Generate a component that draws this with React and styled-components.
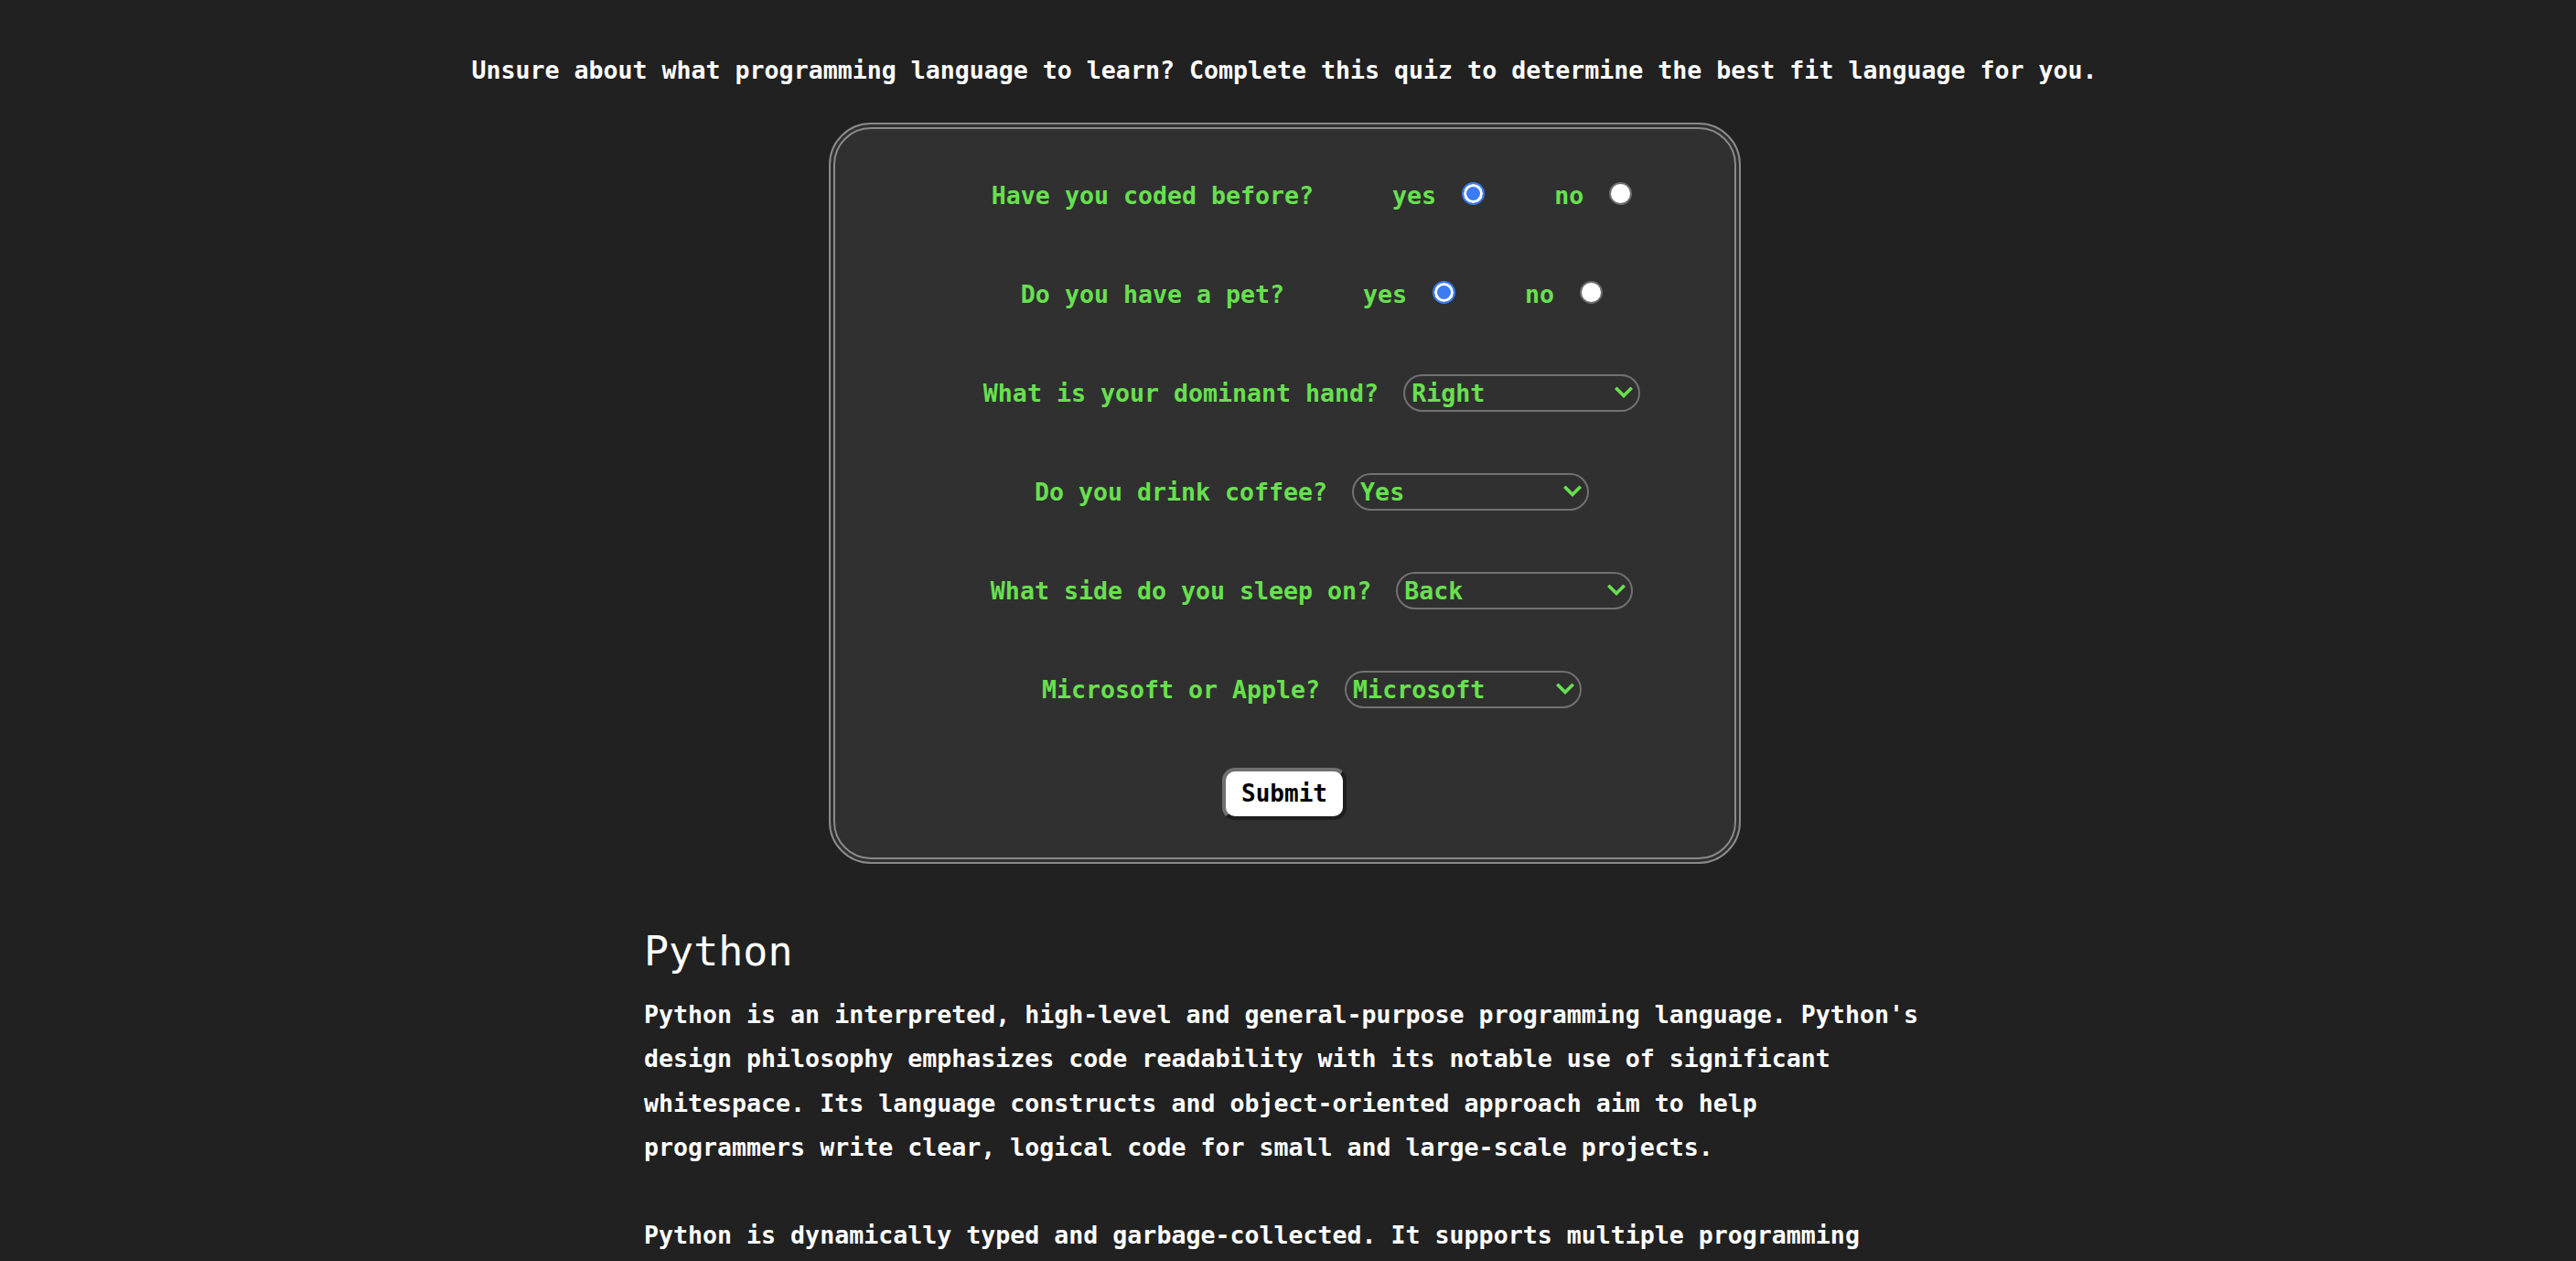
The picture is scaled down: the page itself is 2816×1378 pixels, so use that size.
import React from 'react';
import styled, { createGlobalStyle } from 'styled-components';

const GREEN = '#68e04f';

const GlobalStyle = createGlobalStyle`
  html, body { background: #212121; }
  body {
    margin: 8px 16px 8px 8px;
    font-family: "DejaVu Sans Mono", "Liberation Mono", monospace;
    color: #ffffff;
  }
`;

const Intro = styled.p`
  margin: 45px 0 33px;
  text-align: center;
  font-size: 26.6px;
  font-weight: 700;
  line-height: 48px;
`;

const Card = styled.form`
  box-sizing: border-box;
  width: 997px;
  margin: 0 auto;
  background: #303030;
  border: 7px double #8a8a8a;
  border-radius: 46px;
  padding: 50px 0 41px;
  display: flex;
  flex-direction: column;
  align-items: center;
  gap: 64px;
`;

const Row = styled.div`
  display: flex;
  align-items: center;
  height: 44px;
  padding-left: 60px;
`;

const Question = styled.span`
  color: ${GREEN};
  font-weight: 700;
  font-size: 26.6px;
  white-space: pre;
`;

const Choice = styled.label`
  display: flex;
  align-items: center;
  gap: 28px;
  margin-left: ${p => p.$offset}px;
  color: ${GREEN};
  font-weight: 700;
  font-size: 26.6px;
`;

const Radio = styled.input.attrs({ type: 'radio' })`
  appearance: none;
  -webkit-appearance: none;
  box-sizing: border-box;
  width: 25px;
  height: 25px;
  margin: 0;
  border-radius: 50%;
  background: #ffffff;
  border: 2px solid #6d6d6d;
  transform: translateY(-2px);

  &:checked {
    background: #3b7bf3;
    border: 2.5px solid #3b7bf3;
    box-shadow: inset 0 0 0 3px #ffffff;
  }
`;

const SelectWrap = styled.div`
  position: relative;
  margin-left: 27px;
  display: flex;
`;

const Select = styled.select`
  appearance: none;
  -webkit-appearance: none;
  box-sizing: border-box;
  width: 259px;
  height: 41px;
  border: 2px solid #727272;
  border-radius: 21px;
  background: transparent;
  color: ${GREEN};
  font-family: inherit;
  font-weight: 700;
  font-size: 26.6px;
  padding: 0 30px 0 7px;
  outline: none;
`;

const Chevron = styled.svg`
  position: absolute;
  right: 8px;
  top: 50%;
  transform: translateY(-50%);
  pointer-events: none;
`;

const SubmitButton = styled.button`
  font-family: inherit;
  font-weight: 700;
  font-size: 26px;
  line-height: 31px;
  color: #000000;
  background: #ffffff;
  padding: 9px 17px;
  border: 4px solid;
  border-color: #707070 #1e1e1e #1e1e1e #707070;
  border-radius: 14px;
  cursor: pointer;
`;

const Section = styled.section`
  width: 1400px;
  margin: 69px auto 0;
`;

const Title = styled.h2`
  margin: 0 0 18px;
  font-size: 45px;
  font-weight: 400;
  line-height: 54px;
`;

const Paragraph = styled.p`
  margin: 0 0 47px;
  font-size: 26.6px;
  font-weight: 700;
  line-height: 48.4px;
`;

function RadioQuestion({ text, name }) {
  return (
    <Row>
      <Question>{text}</Question>
      <Choice $offset={86}>
        yes
        <Radio name={name} value="yes" defaultChecked />
      </Choice>
      <Choice $offset={76}>
        no
        <Radio name={name} value="no" />
      </Choice>
    </Row>
  );
}

function SelectQuestion({ text, options }) {
  return (
    <Row>
      <Question>{text}</Question>
      <SelectWrap>
        <Select defaultValue={options[0]}>
          {options.map(o => (
            <option key={o} value={o}>{o}</option>
          ))}
        </Select>
        <Chevron width="20" height="13" viewBox="0 0 20 13">
          <polyline points="2.5,2.5 10,10 17.5,2.5" fill="none" stroke={GREEN} strokeWidth="3.6" strokeLinecap="square" />
        </Chevron>
      </SelectWrap>
    </Row>
  );
}

export default function App() {
  return (
    <>
      <GlobalStyle />
      <Intro>
        Unsure about what programming language to learn? Complete this quiz to determine the best fit language for you.
      </Intro>
      <Card onSubmit={e => e.preventDefault()}>
        <RadioQuestion text="Have you coded before?" name="coded" />
        <RadioQuestion text="Do you have a pet?" name="pet" />
        <SelectQuestion text="What is your dominant hand?" options={['Right', 'Left']} />
        <SelectQuestion text="Do you drink coffee?" options={['Yes', 'No']} />
        <SelectQuestion text="What side do you sleep on?" options={['Back', 'Side', 'Stomach']} />
        <SelectQuestion text="Microsoft or Apple?" options={['Microsoft', 'Apple']} />
        <SubmitButton type="submit">Submit</SubmitButton>
      </Card>
      <Section>
        <Title>Python</Title>
        <Paragraph>
          Python is an interpreted, high-level and general-purpose programming language. Python's design philosophy emphasizes code readability with its notable use of significant whitespace. Its language constructs and object-oriented approach aim to help programmers write clear, logical code for small and large-scale projects.
        </Paragraph>
        <Paragraph>
          Python is dynamically typed and garbage-collected. It supports multiple programming paradigms, including structured (particularly, procedural), object-oriented, and functional programming. Python is often described as a "batteries included" language due to its comprehensive standard library.
        </Paragraph>
      </Section>
    </>
  );
}
